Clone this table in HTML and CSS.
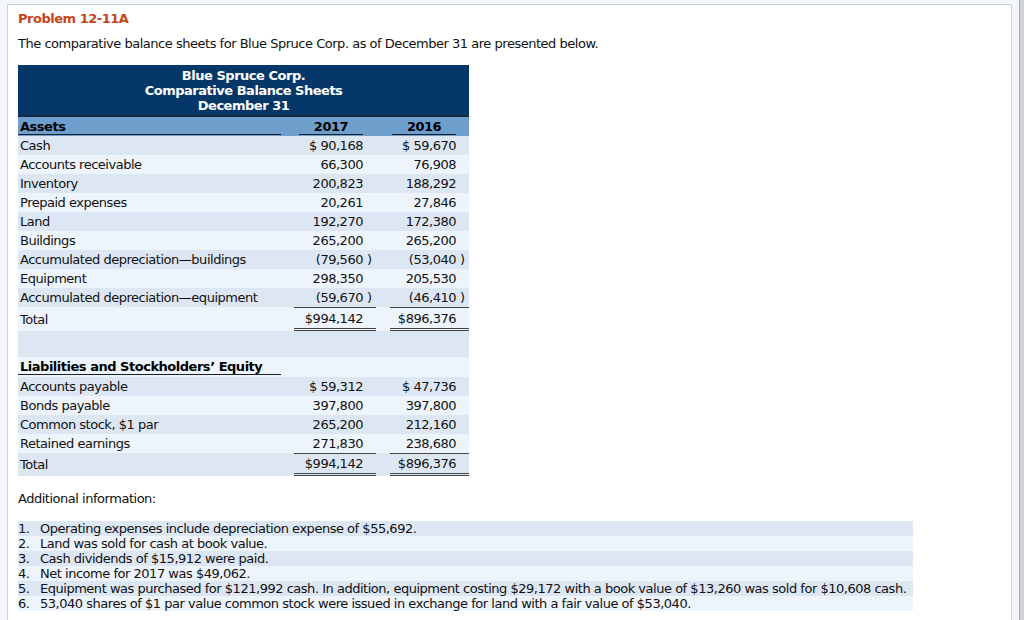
FILE: index.html
```html
<!DOCTYPE html>
<html>
<head>
<meta charset="utf-8">
<link rel="stylesheet" href="styles.css">
</head>
<body>
<div class="wrap">
  <div class="panel">
    <h1 class="title">Problem 12-11A</h1>
    <p class="intro">The comparative balance sheets for Blue Spruce Corp. as of December 31 are presented below.</p>

    <table class="bs">
      <colgroup>
        <col class="c-label"><col class="c-gap1"><col class="c-y1"><col class="c-gap2"><col class="c-y2">
      </colgroup>
      <thead>
        <tr class="head">
          <th colspan="5">Blue Spruce Corp.<br>Comparative Balance Sheets<br>December 31</th>
        </tr>
        <tr class="sub">
          <th class="lbl"><div class="ul">Assets</div></th>
          <th></th>
          <th class="yr"><div class="ul y1">2017</div></th>
          <th></th>
          <th class="yr"><div class="ul y2">2016</div></th>
        </tr>
      </thead>
      <tbody>
        <tr class="d"><td class="lbl">Cash</td><td></td><td class="n">$ 90,168<span class="p"></span></td><td></td><td class="n">$ 59,670<span class="p"></span></td></tr>
        <tr class="l"><td class="lbl">Accounts receivable</td><td></td><td class="n">66,300<span class="p"></span></td><td></td><td class="n">76,908<span class="p"></span></td></tr>
        <tr class="d"><td class="lbl">Inventory</td><td></td><td class="n">200,823<span class="p"></span></td><td></td><td class="n">188,292<span class="p"></span></td></tr>
        <tr class="l"><td class="lbl">Prepaid expenses</td><td></td><td class="n">20,261<span class="p"></span></td><td></td><td class="n">27,846<span class="p"></span></td></tr>
        <tr class="d"><td class="lbl">Land</td><td></td><td class="n">192,270<span class="p"></span></td><td></td><td class="n">172,380<span class="p"></span></td></tr>
        <tr class="l"><td class="lbl">Buildings</td><td></td><td class="n">265,200<span class="p"></span></td><td></td><td class="n">265,200<span class="p"></span></td></tr>
        <tr class="d"><td class="lbl">Accumulated depreciation—buildings</td><td></td><td class="n">(79,560<span class="p">)</span></td><td></td><td class="n">(53,040<span class="p">)</span></td></tr>
        <tr class="l"><td class="lbl">Equipment</td><td></td><td class="n">298,350<span class="p"></span></td><td></td><td class="n">205,530<span class="p"></span></td></tr>
        <tr class="d"><td class="lbl">Accumulated depreciation—equipment</td><td></td><td class="n">(59,670<span class="p">)</span></td><td></td><td class="n">(46,410<span class="p">)</span></td></tr>
        <tr class="l total t1"><td class="lbl">Total</td><td></td><td class="n tot">$994,142<span class="p"></span></td><td></td><td class="n tot">$896,376<span class="p"></span></td></tr>
        <tr class="d empty"><td colspan="5"></td></tr>
        <tr class="l sec"><td class="lbl"><div class="ul b">Liabilities and Stockholders’ Equity</div></td><td></td><td></td><td></td><td></td></tr>
        <tr class="d"><td class="lbl">Accounts payable</td><td></td><td class="n">$ 59,312<span class="p"></span></td><td></td><td class="n">$ 47,736<span class="p"></span></td></tr>
        <tr class="l"><td class="lbl">Bonds payable</td><td></td><td class="n">397,800<span class="p"></span></td><td></td><td class="n">397,800<span class="p"></span></td></tr>
        <tr class="d"><td class="lbl">Common stock, $1 par</td><td></td><td class="n">265,200<span class="p"></span></td><td></td><td class="n">212,160<span class="p"></span></td></tr>
        <tr class="l"><td class="lbl">Retained earnings</td><td></td><td class="n">271,830<span class="p"></span></td><td></td><td class="n">238,680<span class="p"></span></td></tr>
        <tr class="d total"><td class="lbl">Total</td><td></td><td class="n tot">$994,142<span class="p"></span></td><td></td><td class="n tot">$896,376<span class="p"></span></td></tr>
      </tbody>
    </table>

    <p class="addl">Additional information:</p>

    <ol class="info">
      <li class="d"><span class="num">1.</span><span class="txt">Operating expenses include depreciation expense of $55,692.</span></li>
      <li class="l"><span class="num">2.</span><span class="txt">Land was sold for cash at book value.</span></li>
      <li class="d"><span class="num">3.</span><span class="txt">Cash dividends of $15,912 were paid.</span></li>
      <li class="l"><span class="num">4.</span><span class="txt">Net income for 2017 was $49,062.</span></li>
      <li class="d"><span class="num">5.</span><span class="txt">Equipment was purchased for $121,992 cash. In addition, equipment costing $29,172 with a book value of $13,260 was sold for $10,608 cash.</span></li>
      <li class="l"><span class="num">6.</span><span class="txt">53,040 shares of $1 par value common stock were issued in exchange for land with a fair value of $53,040.</span></li>
    </ol>
  </div>
</div>
<div class="edge"></div>
</body>
</html>
```

FILE: styles.css
```css
html, body {
  height: 100%;
}
body {
  margin: 0;
  display: flex;
  background: #f3f7fb;
  font-family: "DejaVu Sans", Verdana, sans-serif;
  font-size: 13px;
  letter-spacing: -0.48px;
  color: #111;
  overflow: hidden;
}
.wrap {
  flex: 1;
  padding: 4px 7px 0 7px;
}
.panel {
  background: #fff;
  border: 1px solid #c4d1df;
  padding: 6px 10px 40px 10px;
  min-height: 700px;
}
.edge {
  width: 4px;
  border-left: 1px solid #a9a9a9;
  background: #d3d3d3;
}
.title {
  margin: 0;
  font-size: 13px;
  line-height: 15px;
  font-weight: bold;
  color: #c6441b;
}
.intro {
  margin: 10px 0 0;
  line-height: 15px;
}

/* Balance sheet table */
.bs {
  margin-top: 14px;
  border-collapse: separate;
  border-spacing: 0;
  width: 451px;
  table-layout: fixed;
  line-height: 15px;
}
.c-label { width: 263px; }
.c-gap1 { width: 13px; }
.c-y1 { width: 82px; }
.c-gap2 { width: 14px; }
.c-y2 { width: 79px; }

.bs th, .bs td {
  padding: 2px 0;
  white-space: nowrap;
}
.bs .head th {
  background: #063769;
  color: #fff;
  font-weight: bold;
  text-align: center;
  padding: 3px 0 2px;
  border-bottom: 2px solid #17293f;
}
.bs .sub th {
  background: #6d9ecc;
  padding: 2px 0 1px;
  font-weight: bold;
  color: #000;
}
.ul {
  border-bottom: 1px solid #1a1f2a;
}
.sub .lbl .ul {
  text-align: left;
  padding-left: 2px;
}
.yr .ul {
  text-align: center;
}
.ul.y1 { margin: 0 13px 0 5px; }
.ul.y2 { margin: 0 13px 0 2px; }

.bs tr.d td { background: #dde7f4; }
.bs tr.l td { background: #edf4fc; }

.n {
  text-align: right;
}
.p {
  display: inline-block;
  width: 13px;
  padding-left: 4px;
  box-sizing: border-box;
  text-align: left;
}
.bs tr.total td {
  padding-top: 2px;
  padding-bottom: 2px;
}
.bs tr.total td.tot {
  border-top: 1px solid #444;
  border-bottom: 3px double #444;
}
.bs tr.total.t1 td {
  padding-top: 3px;
}
.bs tr.empty td {
  height: 26px;
  padding: 0;
}
.bs td.lbl, .bs th.lbl {
  text-align: left;
  padding-left: 2px;
}
.bs .sub th.lbl {
  padding-left: 0;
}
.ul.b {
  font-weight: bold;
  color: #000;
  margin-left: -2px;
  padding-left: 2px;
}

.addl {
  margin: 15px 0 0;
  line-height: 15px;
}

.info {
  list-style: none;
  margin: 15px 0 0;
  padding: 0;
  display: inline-block;
  line-height: 15px;
}
.info li {
  display: flex;
  padding-right: 7px;
}
.info li.d { background: #dde7f4; }
.info li.l { background: #edf4fc; }
.info .num {
  width: 22px;
  flex: none;
}
.info .txt {
  white-space: nowrap;
}
```
